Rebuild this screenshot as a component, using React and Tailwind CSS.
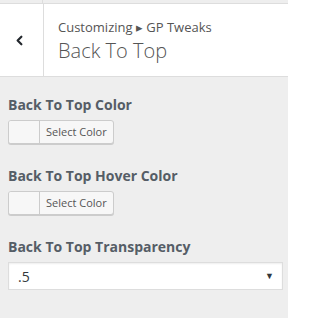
import { ChevronLeft } from 'lucide-react';

const ColorPicker = ({ label }) => (
  <div className="mb-[22px]">
    <div className="text-[14px] font-bold leading-[20px] text-[#555d66] mb-[5px]">{label}</div>
    <button className="flex h-[24px] items-stretch rounded-[3px] border border-[#ccc] bg-[#f7f7f7] shadow-[0_1px_0_#ccc] overflow-hidden">
      <span className="w-[31px] border-r border-[#ccc] bg-[#f7f7f7]" />
      <span className="px-[6px] text-[11px] leading-[22px] text-[#555]">Select Color</span>
    </button>
  </div>
);

export default function App() {
  return (
    <div
      className="w-[288px] h-[318px] bg-[#eee] overflow-hidden"
      style={{ fontFamily: '"Open Sans", "Noto Sans", sans-serif' }}
    >
      {/* previous section strip */}
      <div className="flex h-[3px]">
        <div className="w-[43px] border-r border-[#ddd]" />
      </div>

      {/* Header */}
      <div className="flex h-[74px] border-y border-[#ddd] bg-white">
        <div className="flex w-[44px] items-center pl-[12px] border-r border-[#ddd]">
          <ChevronLeft className="w-[15px] h-[15px] text-[#23282d]" strokeWidth={3.5} />
        </div>
        <div className="pl-[14px] pt-[13px]">
          <div className="text-[13px] leading-[20px] text-[#555]">Customizing ▸ GP Tweaks</div>
          <div className="text-[20px] font-light leading-[28px] text-[#555]">Back To Top</div>
        </div>
      </div>

      {/* Controls */}
      <div className="px-[8px] pt-[18px]">
        <ColorPicker label="Back To Top Color" />
        <ColorPicker label="Back To Top Hover Color" />
        <div className="text-[14px] font-bold leading-[20px] text-[#555d66] mb-[5px]">Back To Top Transparency</div>
        <div className="flex h-[28px] w-[275px] items-center justify-between border border-[#ddd] bg-white pl-[9px] pr-[8px] shadow-[0_1px_2px_rgba(0,0,0,0.07)_inset]">
          <span className="text-[14px] text-[#32373c]">.5</span>
          <span className="text-[9px] text-[#32373c]">▼</span>
        </div>
      </div>
    </div>
  );
}
